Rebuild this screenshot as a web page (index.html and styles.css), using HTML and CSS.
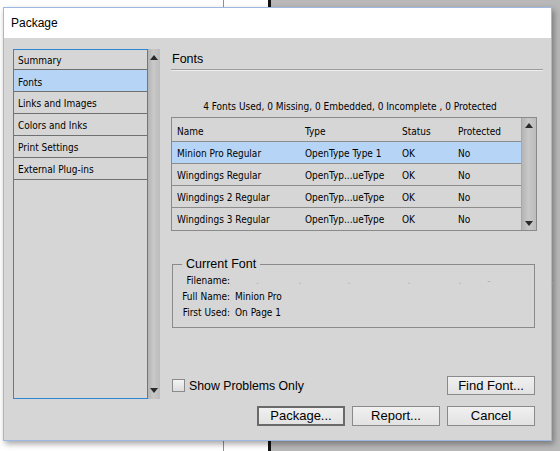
FILE: index.html
```html
<!DOCTYPE html>
<html>
<head>
<meta charset="utf-8">
<link rel="stylesheet" href="styles.css">
</head>
<body>
<div class="desk">
  <div class="desk-guide"></div>
  <div class="desk-edge"></div>
  <div class="desk-pasteboard"></div>
</div>
<div class="dialog">
  <div class="titlebar">Package</div>
  <div class="dlg-body">
    <div class="side">
      <ul class="navlist">
        <li class="nav-item">Summary</li>
        <li class="nav-item selected">Fonts</li>
        <li class="nav-item">Links and Images</li>
        <li class="nav-item">Colors and Inks</li>
        <li class="nav-item">Print Settings</li>
        <li class="nav-item">External Plug-ins</li>
      </ul>
      <div class="vscroll side-scroll">
        <span class="arrow-up"></span>
        <span class="arrow-down"></span>
      </div>
    </div>
    <div class="main">
      <div class="heading">Fonts</div>
      <div class="summary">4 Fonts Used, 0 Missing, 0 Embedded, 0 Incomplete , 0 Protected</div>
      <div class="fonttable">
        <div class="rows">
          <div class="row head"><span>Name</span><span>Type</span><span>Status</span><span>Protected</span></div>
          <div class="row selected"><span>Minion Pro Regular</span><span>OpenType Type 1</span><span>OK</span><span>No</span></div>
          <div class="row"><span>Wingdings Regular</span><span>OpenTyp...ueType</span><span>OK</span><span>No</span></div>
          <div class="row"><span>Wingdings 2 Regular</span><span>OpenTyp...ueType</span><span>OK</span><span>No</span></div>
          <div class="row last"><span>Wingdings 3 Regular</span><span>OpenTyp...ueType</span><span>OK</span><span>No</span></div>
        </div>
        <div class="vscroll table-scroll">
          <span class="arrow-up"></span>
          <span class="arrow-down"></span>
        </div>
      </div>
      <div class="group">
        <div class="group-title">Current Font</div>
        <div class="info"><span class="lbl">Filename:</span><span class="val blurred">.&nbsp;&nbsp;&nbsp;&nbsp;&nbsp;&nbsp;&nbsp;&nbsp;&nbsp;&nbsp;&nbsp;&nbsp;&nbsp;&nbsp;.&nbsp;&nbsp;&nbsp;&nbsp;&nbsp;&nbsp;&nbsp;&nbsp;&nbsp;&nbsp;&nbsp;&nbsp;&nbsp;&nbsp;&nbsp;&nbsp;.&nbsp;&nbsp;&nbsp;&nbsp;&nbsp;&nbsp;&nbsp;&nbsp;&nbsp;&nbsp;&nbsp;&nbsp;&nbsp;&nbsp;&nbsp;&nbsp;&nbsp;&nbsp;&nbsp;&nbsp;.&nbsp;&nbsp;&nbsp;&nbsp;&nbsp;&nbsp;&nbsp;&nbsp;&nbsp;&nbsp;&nbsp;&nbsp;&nbsp;&nbsp;&nbsp;&nbsp;&nbsp;.&nbsp;&nbsp;&nbsp;&nbsp;&nbsp;&nbsp;&nbsp;&nbsp;&nbsp;-&nbsp;&nbsp;&nbsp;&nbsp;&nbsp;&nbsp;&nbsp;&nbsp;&nbsp;&nbsp;&nbsp;&nbsp;&nbsp;&nbsp;&nbsp;&nbsp;&nbsp;&nbsp;&nbsp;&nbsp;&nbsp;.</span></div>
        <div class="info"><span class="lbl">Full Name:</span><span class="val">Minion Pro</span></div>
        <div class="info"><span class="lbl">First Used:</span><span class="val">On Page 1</span></div>
      </div>
      <div class="optrow">
        <label class="check"><span class="box"></span>Show Problems Only</label>
        <button class="btn">Find Font...</button>
      </div>
      <div class="btnrow">
        <button class="btn default">Package...</button>
        <button class="btn">Report...</button>
        <button class="btn">Cancel</button>
      </div>
    </div>
  </div>
</div>
</body>
</html>
```
FILE: styles.css
```css
* { box-sizing: border-box; }
html, body { margin: 0; padding: 0; }
body {
  width: 560px;
  height: 451px;
  overflow: hidden;
  position: relative;
  background: #ffffff;
  font-family: "Liberation Sans", Arial, sans-serif;
  color: #000;
}
.desk-guide {
  position: absolute; left: 223px; top: 0; width: 1px; height: 451px;
  background: #a477d8;
}
.desk-edge {
  position: absolute; left: 268px; top: 0; width: 3px; height: 451px;
  background: #111;
}
.desk-pasteboard {
  position: absolute; left: 271px; top: 0; right: 0; height: 451px;
  background: #b8b8b8;
}
.dialog {
  position: absolute;
  left: 3px; top: 7px;
  width: 549px; height: 434px;
  border: 1px solid #9db8e2;
  background: #d6d6d6;
  box-shadow: 2px 3px 6px rgba(0,0,0,0.35);
  display: flex;
  flex-direction: column;
}
.titlebar {
  height: 30px;
  background: #ffffff;
  font-size: 12px;
  line-height: 31px;
  padding-left: 7px;
  flex: none;
}
.dlg-body {
  flex: 1;
  display: flex;
  padding: 11px 8px 0 9px;
  font-family: "DejaVu Sans Condensed", "DejaVu Sans", sans-serif;
  font-stretch: condensed;
  font-size: 10px;
}
.side {
  display: flex;
  height: 350px;
  flex: none;
}
.navlist {
  list-style: none;
  margin: 0;
  padding: 0;
  width: 135px;
  border: 1px solid #2f87d4;
  background: #d6d6d6;
}
.nav-item {
  height: 22px;
  line-height: 24px;
  padding-left: 4px;
  border-bottom: 1px solid #707070;
}
.nav-item:first-child { height: 20px; line-height: 22px; }
.nav-item.selected { background: #b6d5f6; line-height: 25px; }
.vscroll {
  position: relative;
  background: linear-gradient(to right, #b4b4b4, #c8c8c8 45%, #bcbcbc);
}
.side-scroll { width: 12px; }
.arrow-up, .arrow-down {
  position: absolute;
  left: 50%;
  margin-left: -4px;
  width: 0; height: 0;
  border-left: 4px solid transparent;
  border-right: 4px solid transparent;
}
.arrow-up { top: 6px; border-bottom: 5px solid #2a2a2a; }
.arrow-down { bottom: 6px; border-top: 5px solid #2a2a2a; }
.main {
  margin-left: 11px;
  width: 372px;
  display: flex;
  flex-direction: column;
}
.heading {
  height: 21px;
  font-family: "Liberation Sans", Arial, sans-serif;
  font-stretch: normal;
  font-size: 12.5px;
  line-height: 21px;
  padding-left: 1px;
  border-bottom: 1px solid #9c9c9c;
  box-shadow: 0 1px 0 #eeeeee;
}
.summary {
  width: 366px;
  margin-top: 30px;
  height: 14px;
  line-height: 14px;
  text-align: center;
  padding-right: 8px;
}
.fonttable {
  margin-top: 3px;
  width: 366px;
  height: 114px;
  border: 1px solid #8a8a8a;
  display: flex;
}
.rows { flex: 1; }
.row {
  display: grid;
  grid-template-columns: 128px 97px 56px 1fr;
  height: 22px;
  line-height: 24px;
  padding-left: 5px;
  border-bottom: 1px solid #8c8c8c;
  white-space: nowrap;
}
.row.head { height: 24px; line-height: 28px; }
.row.selected { background: #b6d5f6; }
.row.last { border-bottom: none; }
.table-scroll {
  width: 15px;
  border-left: 1px solid #a8a8a8;
}
.table-scroll .arrow-up { top: 5px; }
.table-scroll .arrow-down { bottom: 4px; }
.group {
  position: relative;
  margin-top: 33px;
  margin-left: 1px;
  width: 363px;
  height: 64px;
  border: 1px solid #8a8a8a;
  padding-top: 8px;
}
.group-title {
  position: absolute;
  top: -9px;
  left: 9px;
  padding: 0 4px;
  font-family: "Liberation Sans", Arial, sans-serif;
  font-stretch: normal;
  font-size: 12.5px;
  line-height: 16px;
  background: #d6d6d6;
}
.info {
  display: flex;
  height: 16px;
  line-height: 16px;
}
.lbl {
  width: 57px;
  text-align: right;
  flex: none;
}
.val { margin-left: 5px; }
.blurred { color: #b0b0b0; margin-left: 26px; white-space: nowrap; }
.optrow {
  margin-top: 48px;
  height: 19px;
  display: flex;
  align-items: center;
  margin-right: 8px;
}
.check {
  display: flex;
  align-items: center;
  font-family: "Liberation Sans", Arial, sans-serif;
  font-stretch: normal;
  font-size: 12.3px;
  margin-left: 1px;
}
.box {
  width: 13px;
  height: 13px;
  border: 1px solid #8a8a8a;
  background: linear-gradient(#f4f4f4, #dcdcdc);
  margin-right: 4px;
}
.btn {
  font-family: "Liberation Sans", Arial, sans-serif;
  font-size: 13px;
  width: 88px;
  height: 19px;
  padding: 0;
  margin: 0;
  border: 1px solid #8a8a8a;
  background: linear-gradient(#f0f0f0, #e2e2e2);
  color: #000;
  line-height: 16px;
}
.optrow .btn { margin-left: auto; }
.btnrow {
  margin-top: 11px;
  display: flex;
  justify-content: flex-end;
  gap: 7px;
  margin-right: 8px;
}
.btnrow .btn { height: 20px; }
.btn.default {
  border: 2px solid #6a6a6a;
}
```
